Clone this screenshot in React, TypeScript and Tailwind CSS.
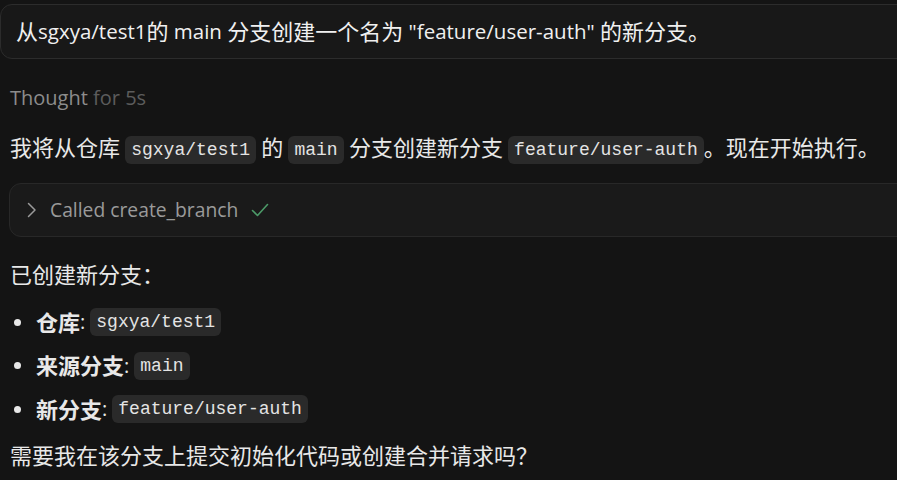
import React from 'react'

const sans = '"Segoe UI", "Open Sans", "Noto Sans CJK SC", sans-serif'
const mono = '"Liberation Mono", "DejaVu Sans Mono", "Noto Sans CJK SC", monospace'

// CJK glyphs in the source render a touch larger than the latin text
function T({ children }: { children: string }) {
  const parts = children.split(/([\u3000-\u9fff\uff00-\uffef]+)/)
  return (
    <>
      {parts.map((p, i) =>
        i % 2 === 1 ? (
          <span key={i} className="text-[22px]">
            {p}
          </span>
        ) : (
          p
        )
      )}
    </>
  )
}

function Code({ children }: { children: React.ReactNode }) {
  return (
    <code
      className="inline-block rounded-md bg-[#2a2a2a] px-[6px] align-[1px] text-[18px] leading-[28px] text-[#e4e4e4]"
      style={{ fontFamily: mono }}
    >
      {children}
    </code>
  )
}

export default function App() {
  const items = [
    { label: '仓库', value: 'sgxya/test1' },
    { label: '来源分支', value: 'main' },
    { label: '新分支', value: 'feature/user-auth' },
  ]

  return (
    <div
      className="h-[480px] w-[897px] overflow-hidden bg-[#141414] text-[20px] text-[#e8e8e8]"
      style={{ fontFamily: sans }}
    >
      {/* user message */}
      <div className="mt-[4px] flex h-[55px] w-[940px] items-center whitespace-pre rounded-xl border border-[#2c2c2c] bg-[#181818] pl-[15px] text-[20.5px] text-[#f0f0f0]">
        <T>{'从sgxya/test1的 main 分支创建一个名为 "feature/user-auth" 的新分支。'}</T>
      </div>

      <div className="ml-[10px] mt-[24px] leading-[30px]">
        <span className="text-[#8c8c8c]">Thought</span>{' '}
        <span className="text-[#5c5c5c]">for 5s</span>
      </div>

      <p className="ml-[10px] mt-[19px] h-[30px] whitespace-pre leading-[30px]">
        <T>{'我将从仓库 '}</T>
        <Code>sgxya/test1</Code>
        <T>{' 的 '}</T>
        <Code>main</Code>
        <T>{' 分支创建新分支 '}</T>
        <Code>feature/user-auth</Code>
        <T>{'。现在开始执行。'}</T>
      </p>

      {/* tool call */}
      <div className="ml-[9px] mt-[21px] flex h-[54px] w-[940px] items-center rounded-xl border border-[#282828] bg-[#1a1a1a] pl-[17px] text-[19.3px] text-[#9a9a9a]">
        <svg width="10" height="16" viewBox="0 0 10 16" fill="none" className="mr-[13px]">
          <path d="M1.5 1.5 L8 8 L1.5 14.5" stroke="#9a9a9a" strokeWidth="1.5" strokeLinecap="round" strokeLinejoin="round" />
        </svg>
        <span>Called create_branch</span>
        <svg width="18" height="14" viewBox="0 0 18 14" fill="none" className="ml-[13px]">
          <path d="M1.5 7.5 L6.5 12.5 L16.5 1.5" stroke="#4c9a68" strokeWidth="1.6" strokeLinecap="round" strokeLinejoin="round" />
        </svg>
      </div>

      <p className="ml-[10px] mt-[22px] h-[30px] leading-[30px]">
        <T>{'已创建新分支：'}</T>
      </p>

      <ul className="ml-[10px] mt-[18px] flex flex-col gap-[13.5px]">
        {items.map((it) => (
          <li key={it.label} className="flex h-[30px] items-center">
            <span className="ml-[4px] mr-[15px] h-[7px] w-[7px] rounded-full bg-[#e8e8e8]" />
            <span className="font-bold">
              <T>{it.label}</T>
            </span>
            <span className="mr-[5px]">:</span>
            <Code>{it.value}</Code>
          </li>
        ))}
      </ul>

      <p className="ml-[10px] mt-[16px] leading-[30px]">
        <T>{'需要我在该分支上提交初始化代码或创建合并请求吗？'}</T>
      </p>
    </div>
  )
}
